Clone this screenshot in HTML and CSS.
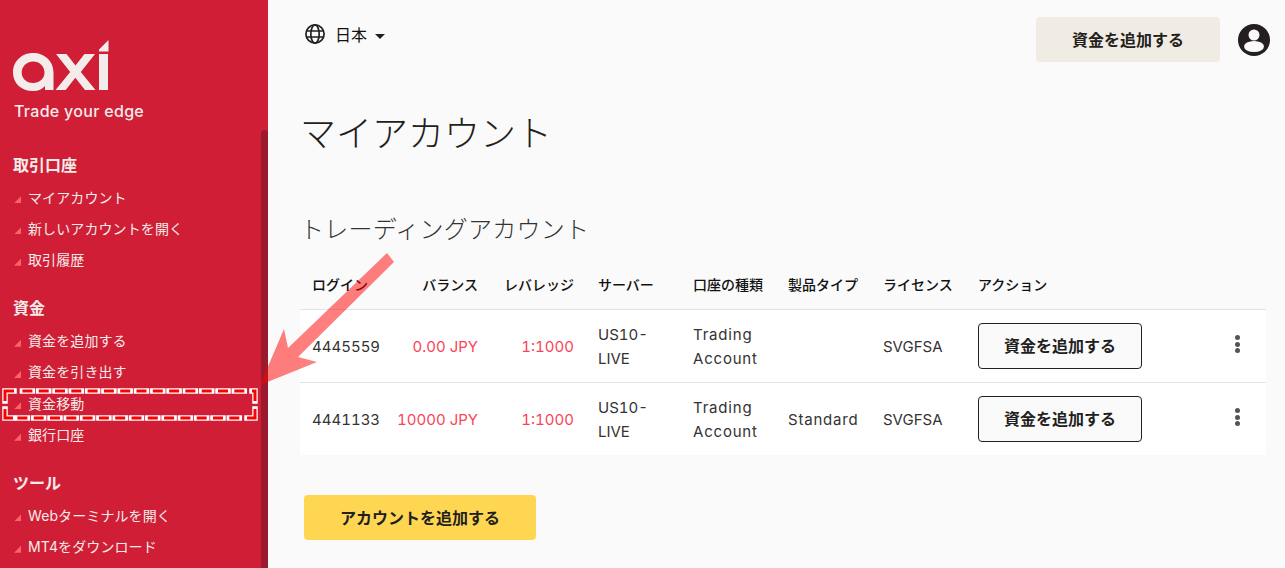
FILE: index.html
```html
<!DOCTYPE html>
<html lang="ja">
<head>
<meta charset="utf-8">
<title>マイアカウント</title>
<link rel="stylesheet" href="styles.css">
</head>
<body>
<div class="app">
  <aside class="sidebar">
    <div class="brand">
      <svg class="logo" width="96" height="52" viewBox="0 0 96 52" aria-label="axi">
        <path class="logo-a" fill-rule="evenodd" d="M20 13C8.500 13 0 21.500 0 32.500S8.500 51 20 51c5.500 0 9.500-2 12-5v4h8.500V32.500C40.500 21 31.500 13 20 13zm0 8.500c6.500 0 11.500 4.800 11.500 11S26.500 43 20 43 8.700 38.500 8.700 32.500 13.500 21.500 20 21.500z"/>
        <path class="logo-a" d="M43 14h10.500l9 11.500 9-11.500H82L67.800 32 82.500 50H72l-9.700-12.300L52.700 50H42.500l14.700-18z"/>
        <path class="logo-a" d="M86 14h9v36h-9zM86 11.500V9.500L95.500 0v11.500z"/>
      </svg>
      <div class="tagline">Trade your edge</div>
    </div>
    <nav class="nav">
      <section class="nav-group">
        <h3 class="nav-title">取引口座</h3>
        <a class="nav-item">マイアカウント</a>
        <a class="nav-item">新しいアカウントを開く</a>
        <a class="nav-item">取引履歴</a>
      </section>
      <section class="nav-group">
        <h3 class="nav-title">資金</h3>
        <a class="nav-item">資金を追加する</a>
        <a class="nav-item">資金を引き出す</a>
        <a class="nav-item">資金移動</a>
        <a class="nav-item">銀行口座</a>
      </section>
      <section class="nav-group">
        <h3 class="nav-title">ツール</h3>
        <a class="nav-item">Webターミナルを開く</a>
        <a class="nav-item">MT4をダウンロード</a>
      </section>
    </nav>
    <div class="scrollbar"></div>
  </aside>
  <main class="main">
    <header class="topbar">
      <div class="lang">
        <svg width="22" height="22" viewBox="0 0 22 22" fill="none" stroke="#231f20" stroke-width="1.700">
          <circle cx="11" cy="11" r="9.100"/>
          <ellipse cx="11" cy="11" rx="4.200" ry="9.100"/>
          <path d="M2 8h18M2 14h18"/>
        </svg>
        <span class="lang-name">日本</span>
        <span class="caret"></span>
      </div>
      <div class="top-actions">
        <button class="btn btn-beige">資金を追加する</button>
        <svg class="avatar" width="32" height="32" viewBox="0 0 32 32">
          <circle cx="16" cy="16" r="16" fill="#231f20"/>
          <circle cx="16" cy="11" r="5.500" fill="#fafafa"/>
          <ellipse cx="16" cy="22.500" rx="10" ry="5.500" fill="#fafafa"/>
        </svg>
      </div>
    </header>
    <h1 class="page-title">マイアカウント</h1>
    <h2 class="section-title">トレーディングアカウント</h2>
    <div class="table">
      <div class="row head">
        <div class="c-login">ログイン</div>
        <div class="c-bal">バランス</div>
        <div class="c-lev">レバレッジ</div>
        <div class="c-srv">サーバー</div>
        <div class="c-type">口座の種類</div>
        <div class="c-prod">製品タイプ</div>
        <div class="c-lic">ライセンス</div>
        <div class="c-act">アクション</div>
      </div>
      <div class="row body">
        <div class="c-login">4445559</div>
        <div class="c-bal red">0.00 JPY</div>
        <div class="c-lev red">1:1000</div>
        <div class="c-srv">US10-<br>LIVE</div>
        <div class="c-type">Trading<br>Account</div>
        <div class="c-prod"></div>
        <div class="c-lic">SVGFSA</div>
        <div class="c-act"><button class="btn btn-outline">資金を追加する</button></div>
        <div class="c-more"><span class="dots"><i></i><i></i><i></i></span></div>
      </div>
      <div class="row body">
        <div class="c-login">4441133</div>
        <div class="c-bal red">10000 JPY</div>
        <div class="c-lev red">1:1000</div>
        <div class="c-srv">US10-<br>LIVE</div>
        <div class="c-type">Trading<br>Account</div>
        <div class="c-prod">Standard</div>
        <div class="c-lic">SVGFSA</div>
        <div class="c-act"><button class="btn btn-outline">資金を追加する</button></div>
        <div class="c-more"><span class="dots"><i></i><i></i><i></i></span></div>
      </div>
    </div>
    <button class="btn btn-yellow">アカウントを追加する</button>
  </main>
</div>
<svg class="annotation" width="1285" height="568" viewBox="0 0 1285 568">
  <path class="arrow" d="M260 385L284 329L288 348L387 253L394 262L298 357L317 362Z"/>
  <g class="marquee-white">
    <path d="M5 401V391H14M5 409V418H13M252 391H255V401M247 418H255V409"/>
    <path class="dash-run" d="M22.400 391H244.400"/>
    <path class="dash-run" d="M17.400 418H239.400"/>
  </g>
  <g class="marquee-red">
    <path d="M5 401V391H14M5 409V418H13M252 391H255V401M247 418H255V409"/>
    <path class="dash-run" d="M22.400 391H244.400"/>
    <path class="dash-run" d="M17.400 418H239.400"/>
  </g>
</svg>
</body>
</html>
```
FILE: styles.css
```css
* { box-sizing: border-box; }
html, body { margin: 0; height: 100%; overflow: hidden; }
body {
  background: #fafafa;
  color: #231f20;
  font-family: "Inter", "Noto Sans CJK JP", sans-serif;
  font-size: 15px;
}
.app { display: flex; width: 1285px; height: 568px; overflow: hidden; }

.sidebar {
  position: relative;
  flex: 0 0 268px;
  height: 568px;
  background: #cf1e36;
  color: #f5ecea;
  padding: 40px 0 0 13px;
  overflow: hidden;
}
.logo { display: block; }
.logo-a { fill: #f4ecea; }
.tagline {
  margin-top: 9px;
  margin-left: 1px;
  font-size: 16px;
  font-weight: 500;
  line-height: 20px;
  letter-spacing: 0.3px;
}
.nav { margin-top: 32px; }
.nav-group { margin-bottom: 21.500px; }
.nav-title {
  margin: 0 0 4px;
  font-size: 16px;
  font-weight: 700;
  line-height: 24px;
}
.nav-item {
  display: flex;
  align-items: center;
  height: 31.330px;
  font-size: 14px;
  font-weight: 400;
  letter-spacing: 0.1px;
}
.nav-item::before {
  content: "";
  width: 7px;
  height: 7px;
  margin: 6px 7px 0 1px;
  background: #ff626a;
  clip-path: polygon(100% 0, 100% 100%, 0 100%);
}
.scrollbar {
  position: absolute;
  right: 0;
  top: 130px;
  bottom: 0;
  width: 7px;
  background: #9c1a2e;
  border-radius: 4px 4px 0 0;
}

.main { flex: 1; padding: 17px 15px 0 32px; min-width: 0; }
.topbar { display: flex; justify-content: space-between; align-items: flex-start; }
.lang {
  display: flex;
  align-items: center;
  margin-left: 4px;
  height: 34px;
  color: #111;
}
.lang-name { margin-left: 9px; font-size: 16px; }
.caret {
  margin-left: 8px;
  margin-top: 4px;
  border: 5px solid transparent;
  border-top-color: #231f20;
  border-bottom: 0;
}
.top-actions { display: flex; align-items: center; gap: 18px; }
.btn {
  font-family: inherit;
  font-size: 16px;
  font-weight: 700;
  color: #231f20;
  border-radius: 4px;
  border: 0;
  padding: 0 0 2px;
}
.btn-beige { width: 184px; height: 45px; background: #f0ebe3; }
.avatar { display: block; }
.page-title {
  margin: 42px 0 0;
  font-size: 36px;
  font-weight: 300;
  line-height: 60px;
}
.section-title {
  margin: 48px 0 0;
  font-size: 24px;
  font-weight: 300;
  line-height: 36px;
  letter-spacing: 0.25px;
  color: #333;
}
.table { margin-top: 15px; width: 966px; }
.row {
  display: grid;
  grid-template-columns: 87px 91px 96px 95px 95px 95px 95px 240px 72px;
  align-items: center;
}
.head { height: 46px; padding-bottom: 4px; font-size: 14px; font-weight: 500; color: #111; }
.body {
  height: 73px;
  background: #fff;
  border-top: 1px solid #e2e2e6;
  line-height: 24px;
  color: #333;
  font-variant-numeric: tabular-nums;
}
.body > div:not(.c-act):not(.c-more) { padding-top: 2px; }
.row > div:first-child { padding-left: 12px; }
.c-login { white-space: nowrap; }
.c-bal, .c-lev { text-align: right; white-space: nowrap; }
.c-srv, .c-type, .c-prod, .c-lic, .c-act { padding-left: 24px; }
.body > .c-type, .body > .c-prod { letter-spacing: 0.8px; }
.red { color: #f84458; }
.btn-outline {
  width: 164px;
  height: 46px;
  background: #fafafa;
  border: 1px solid #231f20;
}
.c-more { display: flex; justify-content: flex-end; padding-right: 26px; }
.dots { display: flex; flex-direction: column; gap: 1.500px; margin-bottom: 4px; }
.dots i { display: block; width: 5px; height: 5px; border-radius: 50%; background: #555; }
.btn-yellow {
  display: block;
  margin: 40px 0 0 4px;
  width: 232px;
  height: 45px;
  background: #ffd651;
}

.annotation { position: absolute; left: 0; top: 0; pointer-events: none; }
.arrow { fill: #ff0000; opacity: 0.5; }
.marquee-white, .marquee-red { fill: none; }
.marquee-white { stroke: #fff; stroke-width: 5.500px; stroke-linecap: square; }
.marquee-red { stroke: #ff0000; stroke-width: 3px; }
.dash-run { stroke-dasharray: 10 6.300; }
```
